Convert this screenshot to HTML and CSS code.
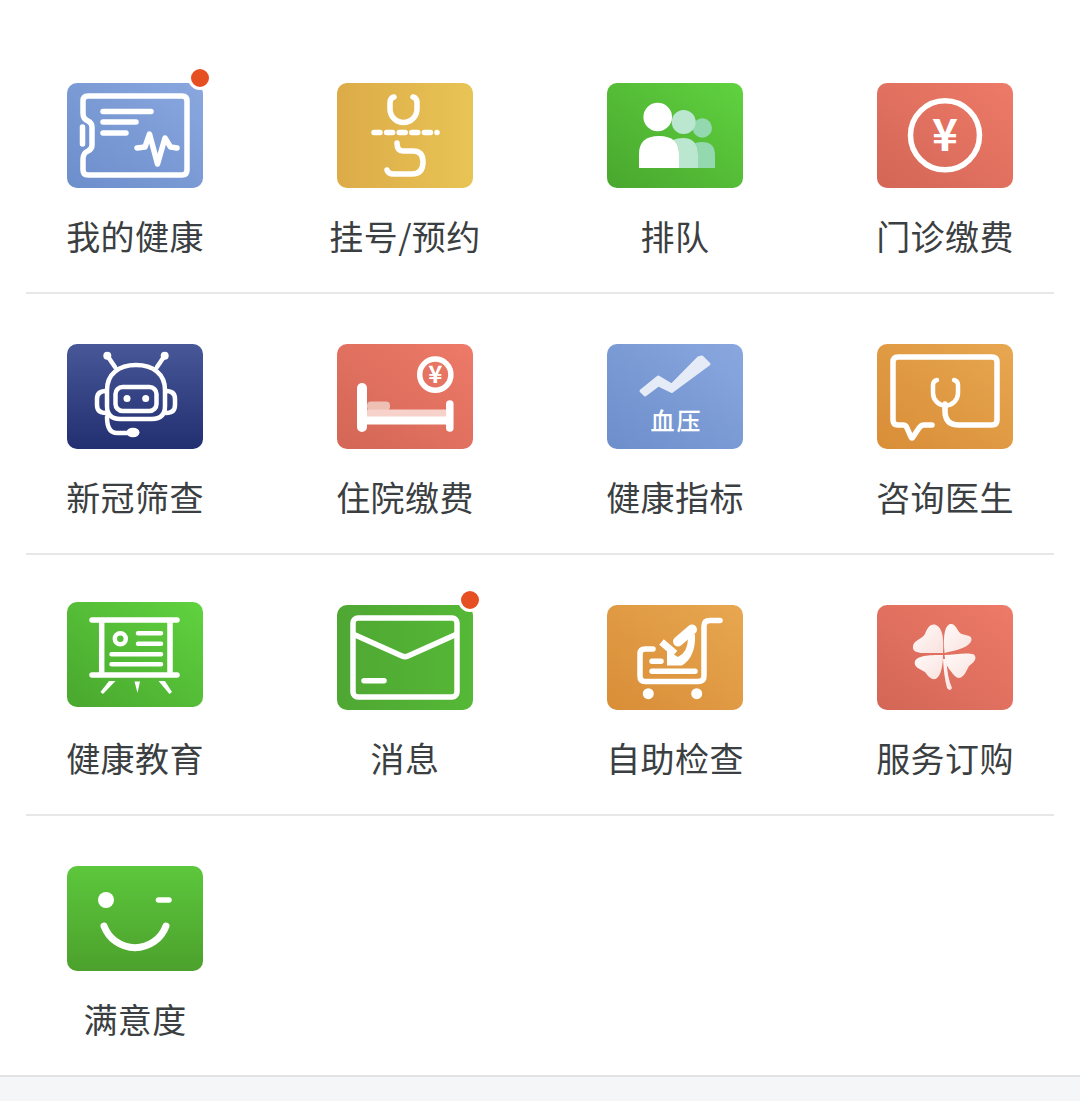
FILE: index.html
```html
<!DOCTYPE html>
<html lang="zh-CN">
<head>
    <meta charset="UTF-8">
    <meta name="viewport" content="width=device-width, initial-scale=1.0">
    <title>服务</title>
    <link rel="stylesheet" href="styles.css">
</head>
<body>
    <div class="menu">
        <div class="row">
            <div class="item">
                <div class="icon blue">
                    <svg viewBox="0 0 136 105">
                        <path class="ln" d="M16 30V18Q16 13 21 13H115Q120 13 120 18V87Q120 92 115 92H21Q16 92 16 87V76Q16 70 21 68Q25 66 25 62V44Q25 40 21 38Q16 36 16 30Z"/>
                        <path class="ln" d="M15.5 44V61"/>
                        <path class="ln" d="M36 28.5H84M36 39H69M36 50H59"/>
                        <path class="ln" d="M70 65L78 64L82.5 51L90.5 81L98 55L103.5 64L110 65"/>
                    </svg>
                    <span class="dot"></span>
                </div>
                <p class="label">我的健康</p>
            </div>
            <div class="item">
                <div class="icon gold">
                    <svg viewBox="0 0 136 105">
                        <path class="ln" d="M57 14Q53 15 53 20V26A13.5 13.5 0 0 0 80 26V20Q80 15 76 14"/>
                        <path class="ln dash" d="M37 49.5H100"/>
                        <path class="ln" d="M60 60Q60 68 66 68H76Q86 68 86 79Q86 91 75 91H57Q51 91 50 87"/>
                    </svg>
                </div>
                <p class="label">挂号/预约</p>
            </div>
            <div class="item">
                <div class="icon green">
                    <svg viewBox="0 0 136 105">
                        <circle class="p3" cx="95.3" cy="45" r="9.7"/>
                        <path class="p3" d="M91 85V72Q91 65 88 60Q92 59 95 59Q108 59 108 72V85Z"/>
                        <circle class="p2" cx="76.7" cy="39" r="12"/>
                        <path class="p2" d="M72 85V70Q72 61 66 57Q70 55 76 55Q91 55 91 72V85Z"/>
                        <circle class="fill" cx="50.7" cy="34" r="14.3"/>
                        <path class="fill" d="M32 85V71Q32 53 52 53Q72 53 72 71V85Z"/>
                    </svg>
                </div>
                <p class="label">排队</p>
            </div>
            <div class="item">
                <div class="icon red">
                    <svg viewBox="0 0 136 105">
                        <circle class="ln" cx="68" cy="52.3" r="34.5"/>
                        <text class="yen yen-big" x="68" y="68">¥</text>
                    </svg>
                </div>
                <p class="label">门诊缴费</p>
            </div>
        </div>
        <hr class="divider">

        <div class="row">
            <div class="item">
                <div class="icon navy">
                    <svg viewBox="0 0 136 105">
                        <path class="ln thin" d="M48 23L40.5 12M90 23L97.5 12"/>
                        <circle class="fill" cx="40.3" cy="11.7" r="4"/>
                        <circle class="fill" cx="97.7" cy="11.7" r="4"/>
                        <path class="ln thin" d="M40 46C40 30 52 21 69 21C86 21 98 30 98 46V62Q98 75 85 75H53Q40 75 40 62Z"/>
                        <rect class="ln thin" x="48.5" y="43" width="41" height="24" rx="7"/>
                        <circle class="fill" cx="60" cy="54.5" r="3.5"/>
                        <circle class="fill" cx="78.7" cy="54.5" r="3.5"/>
                        <path class="ln thin" d="M39 47Q30 47 30 55V61Q30 69 39 69M99 47Q108 47 108 55V61Q108 69 99 69"/>
                        <path class="ln thin" d="M40 73Q40 89 50 89H61"/>
                        <ellipse class="fill" cx="66" cy="88.5" rx="6.5" ry="4.8"/>
                    </svg>
                </div>
                <p class="label">新冠筛查</p>
            </div>
            <div class="item">
                <div class="icon red">
                    <svg viewBox="0 0 136 105">
                        <circle class="ln wide" cx="98.3" cy="30.7" r="15.6"/>
                        <text class="yen yen-small" x="98.3" y="39">¥</text>
                        <rect class="pillow" x="30" y="57.5" width="23" height="9" rx="4"/>
                        <rect class="mattress" x="30" y="65.5" width="79" height="8"/>
                        <path class="ln rail" d="M25 76.5H112"/>
                        <path class="ln post" d="M25 44V83"/>
                        <path class="ln post-small" d="M112.8 60V84"/>
                    </svg>
                </div>
                <p class="label">住院缴费</p>
            </div>
            <div class="item">
                <div class="icon blue">
                    <svg viewBox="0 0 136 105">
                        <polygon class="chart" points="34,47 51.3,33 64.7,41 91.3,14 95,13 102,20 64.7,47.5 51.3,41 38,51"/>
                        <text class="chart-text" x="69.5" y="86">血压</text>
                    </svg>
                </div>
                <p class="label">健康指标</p>
            </div>
            <div class="item">
                <div class="icon orange">
                    <svg viewBox="0 0 136 105">
                        <path class="ln" d="M55 81H47Q44 81 42 84L36 93Q35 95 34 93L30 84Q29 81 26 81H21Q16 81 16 76V18Q16 13 21 13H115Q120 13 120 18V76Q120 81 115 81H82Q68 81 68 67V60"/>
                        <path class="ln thin" d="M60 36Q56 37 56 41V49A12.5 12.5 0 0 0 81 49V41Q81 37 77 36"/>
                    </svg>
                </div>
                <p class="label">咨询医生</p>
            </div>
        </div>
        <hr class="divider">

        <div class="row">
            <div class="item">
                <div class="icon green icon-up">
                    <svg viewBox="0 0 136 105">
                        <path class="ln" d="M25 18H110M25 73H110M34.7 18V73M103 18V73"/>
                        <circle class="ln thin" cx="53.3" cy="36.7" r="5.5"/>
                        <path class="ln thin" d="M71 31.3H94M71 41.7H94M44.5 52.3H94M44.5 62.3H94"/>
                        <polygon class="fill" points="42,79 48.5,79 36,92 33.5,90"/>
                        <polygon class="fill" points="67.5,79.5 73,79.5 70.5,91"/>
                        <polygon class="fill" points="91.5,79 98,79 105,90 102.5,92"/>
                    </svg>
                </div>
                <p class="label">健康教育</p>
            </div>
            <div class="item">
                <div class="icon green-flat">
                    <svg viewBox="0 0 136 105">
                        <rect class="ln" x="16" y="13" width="104" height="79" rx="5"/>
                        <path class="ln" d="M17 29.5L65 51Q68 52.5 71 51L119 29.5"/>
                        <path class="ln" d="M27 75.7H47"/>
                    </svg>
                    <span class="dot"></span>
                </div>
                <p class="label">消息</p>
            </div>
            <div class="item">
                <div class="icon orange">
                    <svg viewBox="0 0 136 105">
                        <path class="ln" d="M113 15.5H103Q97 15.5 97 21V71Q97 76.5 91 76.5H38Q33 76.5 33 71V49Q33 44 38 44H46"/>
                        <circle class="fill" cx="41.3" cy="88.7" r="5.5"/>
                        <circle class="fill" cx="89.7" cy="88.7" r="5.5"/>
                        <path class="ln" d="M45 56.3H54M45 66.3H88"/>
                        <path class="ln tube" d="M71 36.5L85 24.5"/>
                        <path class="ln arm" d="M54.5 37L68 48.5"/>
                        <path class="fill" d="M60 45V60.5H75Q89 52 88 29L81 33Q81 47 71 52L66 49Z"/>
                    </svg>
                </div>
                <p class="label">自助检查</p>
            </div>
            <div class="item">
                <div class="icon red">
                    <svg viewBox="0 0 136 105">
                        <defs>
                            <linearGradient id="petal" x1="0" y1="0" x2="1" y2="1">
                                <stop offset="0" stop-color="#fffafa"/>
                                <stop offset="1" stop-color="#f9e2dd"/>
                            </linearGradient>
                        </defs>
                        <g fill="url(#petal)">
                            <path d="M66 48C67 35 66 23 59 20C53 18 50 24 48 29C45 34 37 35 36 41C35 46 40 48 46 48Z"/>
                            <path d="M67.5 48C66.5 35 66.5 23 72 19.5C78 17 80 25 83 28C87 31 95 29 94.5 35C93 42 81 45 67.5 48Z"/>
                            <path d="M66 50C55 50 41 50 38 56C36 62 43 64 48 67C51 71 54 75 58.5 74C64 72 66 60 66 50Z"/>
                            <path d="M67.5 50C78 49.5 90 47 97 49.5C101 54 96 58 92 61C89 66 87 73 81.5 73C77 72 75 67 72 64C69 60 68 55 67.5 50Z"/>
                            <path d="M66 54Q67 72 70 83Q73 87 75 83Q70 72 69.5 54Z"/>
                        </g>
                    </svg>
                </div>
                <p class="label">服务订购</p>
            </div>
        </div>
        <hr class="divider">

        <div class="row">
            <div class="item">
                <div class="icon green-down">
                    <svg viewBox="0 0 136 105">
                        <circle class="fill" cx="39" cy="34" r="8"/>
                        <path class="ln smile-eye" d="M91.5 34H102"/>
                        <path class="ln smile" d="M37 60A33 33 0 0 0 99 60"/>
                    </svg>
                </div>
                <p class="label">满意度</p>
            </div>
        </div>
    </div>
    <div class="footer"></div>
</body>
</html>
```

FILE: styles.css
```css
* {
    box-sizing: border-box;
}

html, body {
    height: 100%;
}

body {
    margin: 0;
    display: flex;
    flex-direction: column;
    background-color: #fff;
    font-family: "Noto Sans CJK SC", "Noto Sans", sans-serif;
}

.menu {
    padding-top: 33px;
}

.row {
    display: grid;
    grid-template-columns: repeat(4, 270px);
    padding-top: 50px;
    padding-bottom: 36px;
}

.divider {
    height: 2px;
    margin: 0 26px;
    border: none;
    background-color: #e6e7e8;
}

.item {
    display: flex;
    flex-direction: column;
    align-items: center;
}

.label {
    margin: 28px 0 0;
    height: 40px;
    line-height: 40px;
    font-size: 34px;
    letter-spacing: 0.4px;
    color: #3b3f42;
    white-space: nowrap;
}

/* icon tiles */
.icon {
    position: relative;
    width: 136px;
    height: 105px;
    border-radius: 10px;
}

.icon svg {
    display: block;
    width: 136px;
    height: 105px;
}

.icon-up {
    margin-top: -3px;
    margin-bottom: 3px;
}

.blue { background: linear-gradient(to top right, #6c8ecb, #8aa7df); }
.gold { background: linear-gradient(to right, #dcab48, #e8c455); }
.green { background: linear-gradient(to top right, #49a72e, #60d23f); }
.green-flat { background: linear-gradient(to right, #4fa733, #55b836); }
.green-down { background: linear-gradient(to bottom, #5cc73c, #4ca12c); }
.red { background: linear-gradient(to top right, #d36656, #ee7a68); }
.navy { background: linear-gradient(to bottom, #475797, #222f71); }
.orange { background: linear-gradient(to top right, #d98d37, #e7a750); }

.dot {
    position: absolute;
    top: -17px;
    right: -9px;
    width: 24px;
    height: 24px;
    border: 3px solid #fff;
    border-radius: 50%;
    background-color: #e64f22;
}

/* svg parts */
.ln {
    fill: none;
    stroke: #fff;
    stroke-width: 5.5;
    stroke-linecap: round;
    stroke-linejoin: round;
}

.thin { stroke-width: 4.5; }
.wide { stroke-width: 5.5; }
.dash { stroke-dasharray: 6 6.6; }
.rail { stroke-width: 8; stroke-linecap: butt; }
.post { stroke-width: 10; }
.post-small { stroke-width: 7.5; }
.tube { stroke-width: 10; }
.arm { stroke-width: 7; stroke-linecap: butt; }
.smile { stroke-width: 7; }
.smile-eye { stroke-width: 5.5; }

.fill { fill: #fff; }
.p2 { fill: #bbe6cf; }
.p3 { fill: #93d8ae; }
.pillow { fill: #eebfb3; }
.mattress { fill: #f6d2ca; }

.chart {
    fill: #e6ecf7;
    stroke: #e6ecf7;
    stroke-width: 3;
    stroke-linejoin: round;
}

.chart-text {
    fill: #fff;
    font-size: 24px;
    font-weight: 500;
    letter-spacing: 2px;
    text-anchor: middle;
}

.yen {
    fill: #fff;
    font-weight: 700;
    text-anchor: middle;
}

.yen-big { font-size: 44px; }
.yen-small { font-size: 24px; }

.footer {
    flex: 1;
    border-top: 2px solid #e3e4e6;
    background-color: #f5f6f8;
}
```
